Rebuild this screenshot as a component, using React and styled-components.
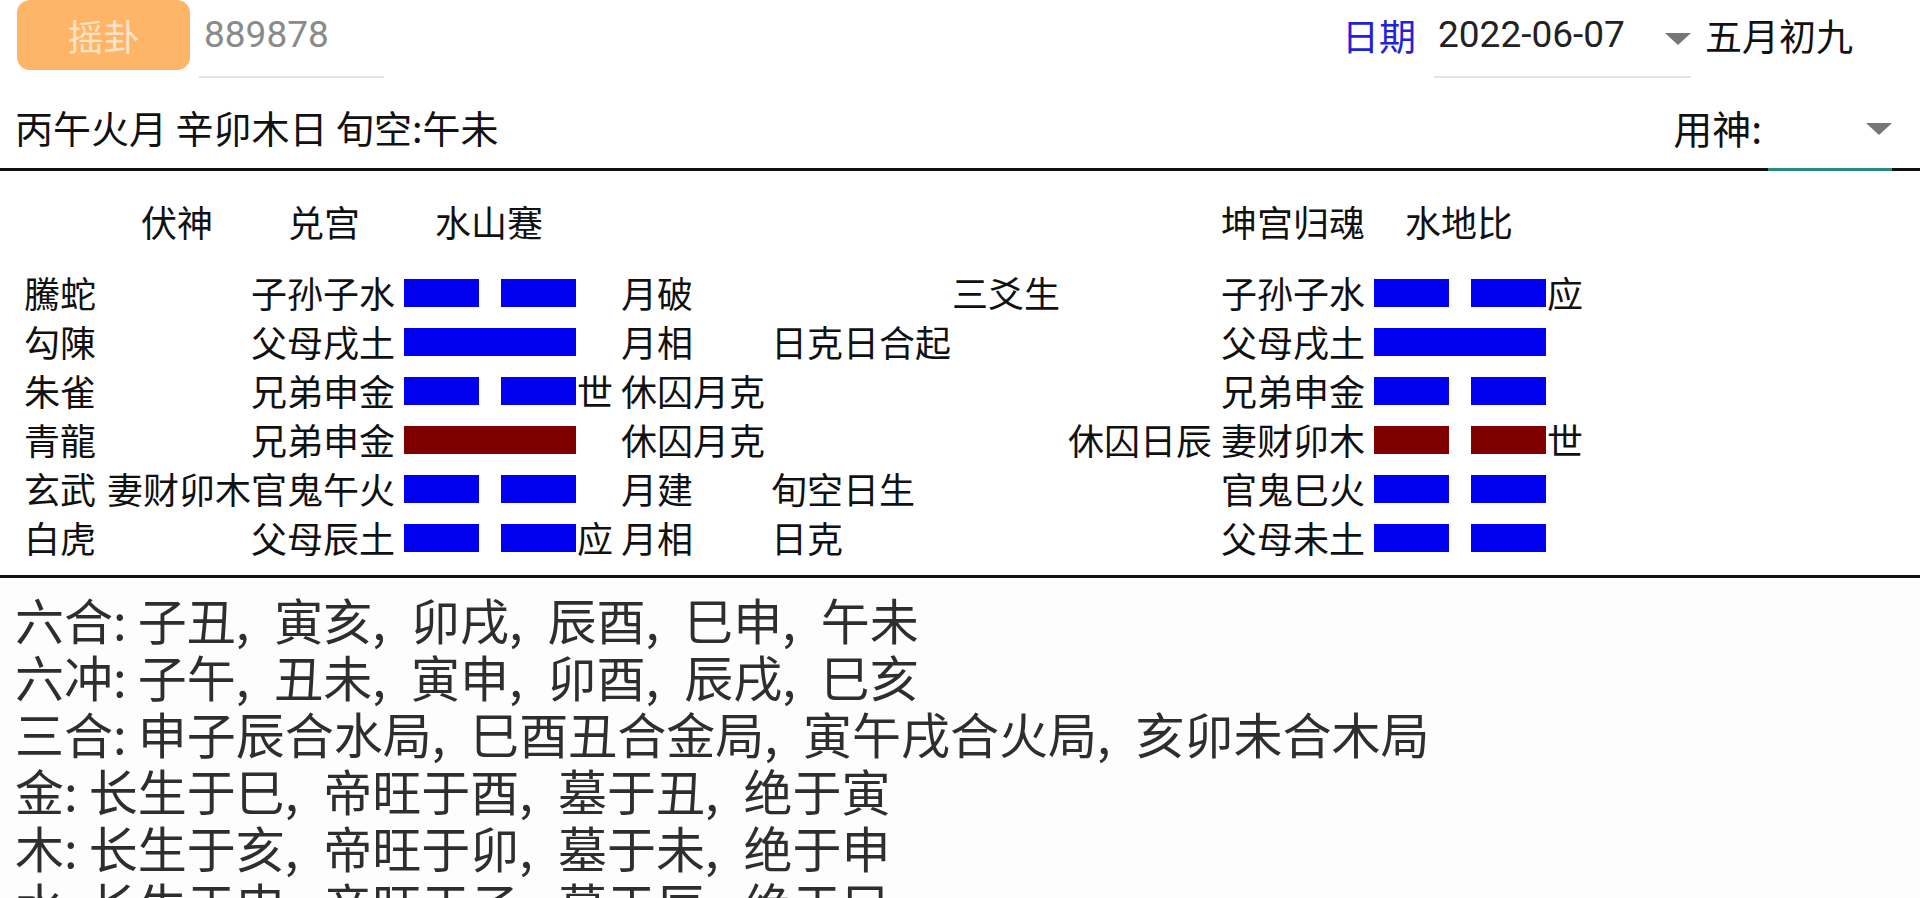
import React from "react";
import styled, { createGlobalStyle } from "styled-components";

const GlobalStyle = createGlobalStyle`
  html, body {
    margin: 0;
    padding: 0;
    background: #ffffff;
  }
  body {
    font-family: "Noto Sans CJK SC", "Noto Sans", sans-serif;
    color: #111;
  }
`;

const left = [
  { spirit: "騰蛇", fu: "", qin: "子孙子水", yao: "yin", mark: "", a: "月破", b: "", c: "三爻生", d: "" },
  { spirit: "勾陳", fu: "", qin: "父母戌土", yao: "yang", mark: "", a: "月相", b: "日克日合起", c: "", d: "" },
  { spirit: "朱雀", fu: "", qin: "兄弟申金", yao: "yin", mark: "世", a: "休囚月克", b: "", c: "", d: "" },
  { spirit: "青龍", fu: "", qin: "兄弟申金", yao: "yang", moving: true, mark: "", a: "休囚月克", b: "", c: "", d: "休囚日辰" },
  { spirit: "玄武", fu: "妻财卯木", qin: "官鬼午火", yao: "yin", mark: "", a: "月建", b: "旬空日生", c: "", d: "" },
  { spirit: "白虎", fu: "", qin: "父母辰土", yao: "yin", mark: "应", a: "月相", b: "日克", c: "", d: "" },
];

const right = [
  { qin: "子孙子水", yao: "yin", mark: "应" },
  { qin: "父母戌土", yao: "yang", mark: "" },
  { qin: "兄弟申金", yao: "yin", mark: "" },
  { qin: "妻财卯木", yao: "yin", moving: true, mark: "世" },
  { qin: "官鬼巳火", yao: "yin", mark: "" },
  { qin: "父母未土", yao: "yin", mark: "" },
];

const notes = [
  { label: "六合", items: ["子丑", "寅亥", "卯戌", "辰酉", "巳申", "午未"] },
  { label: "六冲", items: ["子午", "丑未", "寅申", "卯酉", "辰戌", "巳亥"] },
  { label: "三合", items: ["申子辰合水局", "巳酉丑合金局", "寅午戌合火局", "亥卯未合木局"] },
  { label: "金", items: ["长生于巳", "帝旺于酉", "墓于丑", "绝于寅"] },
  { label: "木", items: ["长生于亥", "帝旺于卯", "墓于未", "绝于申"] },
  { label: "水", items: ["长生于申", "帝旺于子", "墓于辰", "绝于巳"] },
];

function Caret() {
  return (
    <CaretSvg viewBox="0 0 26 12">
      <polygon points="0,0 26,0 13,12" fill="#767676" />
    </CaretSvg>
  );
}

function Yao({ type, moving }) {
  const color = moving ? "#800000" : "#0000ee";
  if (type === "yang") {
    return (
      <BarCell>
        <Bar color={color} full />
      </BarCell>
    );
  }
  return (
    <BarCell>
      <Bar color={color} />
      <Bar color={color} />
    </BarCell>
  );
}

export default function App() {
  return (
    <>
      <GlobalStyle />
      <Page>
        <TopBar>
          <ShakeButton>摇卦</ShakeButton>
          <NumberField>889878</NumberField>
          <Spacer />
          <DateLabel>日期</DateLabel>
          <DateField>
            <span>2022-06-07</span>
            <Caret />
          </DateField>
          <Lunar>五月初九</Lunar>
        </TopBar>

        <InfoBar>
          <InfoText>丙午火月 辛卯木日 旬空:午未</InfoText>
          <Spacer />
          <UseGod>用神:</UseGod>
          <UseGodCaret>
            <Caret />
          </UseGodCaret>
        </InfoBar>

        <Divider>
          <Line />
          <Line accent />
          <Line short />
        </Divider>

        <Board>
          <HeadRow>
            <Cell>伏神</Cell>
            <Cell>兑宫</Cell>
            <Cell>水山蹇</Cell>
            <Cell>坤宫归魂</Cell>
            <Cell>水地比</Cell>
          </HeadRow>
          {left.map((row, i) => (
            <YaoRow key={i}>
              <Cell>{row.spirit}</Cell>
              <Cell>{row.fu}</Cell>
              <Cell>{row.qin}</Cell>
              <Yao type={row.yao} moving={row.moving} />
              <Mark>{row.mark}</Mark>
              <Cell>{row.a}</Cell>
              <Cell>{row.b}</Cell>
              <Cell>{row.c}</Cell>
              <Cell>{row.d}</Cell>
              <Cell>{right[i].qin}</Cell>
              <Yao type={right[i].yao} moving={right[i].moving} />
              <Mark>{right[i].mark}</Mark>
            </YaoRow>
          ))}
        </Board>

        <Divider>
          <Line />
        </Divider>

        <Notes>
          {notes.map((n) => (
            <NoteLine key={n.label}>
              {n.label}: {n.items.map((it, j) => (
                <React.Fragment key={j}>
                  {it}
                  {j < n.items.length - 1 && <Comma>,</Comma>}
                </React.Fragment>
              ))}
            </NoteLine>
          ))}
        </Notes>
      </Page>
    </>
  );
}

const Page = styled.div`
  width: 1920px;
  min-height: 898px;
  background: #ffffff;
`;

const TopBar = styled.div`
  display: flex;
  align-items: flex-start;
  height: 78px;
`;

const ShakeButton = styled.button`
  margin-left: 17px;
  width: 173px;
  height: 70px;
  border: none;
  border-radius: 13px;
  background: #ffb567;
  color: #fde4c9;
  font-family: "Noto Sans CJK SC", sans-serif;
  font-size: 36px;
  padding: 0;
  line-height: 70px;
`;

const NumberField = styled.div`
  margin-left: 9px;
  width: 180px;
  height: 76px;
  padding-left: 5px;
  border-bottom: 2px solid #e4e4e4;
  font-family: Roboto, "Noto Sans", sans-serif;
  font-size: 37px;
  line-height: 70px;
  color: #8a8a8a;
`;

const Spacer = styled.div`
  flex: 1;
`;

const DateLabel = styled.div`
  font-size: 37px;
  line-height: 70px;
  color: #2222d6;
  margin-right: 18px;
`;

const DateField = styled.div`
  display: flex;
  align-items: flex-start;
  justify-content: space-between;
  width: 253px;
  height: 76px;
  padding-left: 4px;
  border-bottom: 2px solid #e4e4e4;
  font-family: Roboto, "Noto Sans", sans-serif;
  font-size: 37px;
  color: #222;

  span {
    line-height: 70px;
  }
  svg {
    margin-top: 33px;
  }
`;

const CaretSvg = styled.svg`
  width: 26px;
  height: 12px;
  display: block;
`;

const Lunar = styled.div`
  margin-left: 14px;
  margin-right: 67px;
  font-size: 37px;
  line-height: 70px;
  color: #111;
`;

const InfoBar = styled.div`
  display: flex;
  align-items: center;
  height: 82px;
  padding-top: 8px;
`;

const InfoText = styled.div`
  margin-left: 15px;
  font-size: 38px;
  line-height: 44px;
  color: #111;
  white-space: pre;
`;

const UseGod = styled.div`
  font-size: 39px;
  line-height: 44px;
  color: #111;
`;

const UseGodCaret = styled.div`
  margin-left: 104px;
  margin-right: 28px;
  padding-top: 4px;
`;

const Divider = styled.div`
  display: flex;
  height: 3px;
`;

const Line = styled.div`
  height: 3px;
  background: ${(p) => (p.accent ? "#2b8a7e" : "#111")};
  flex: ${(p) => (p.accent ? "0 0 124px" : p.short ? "0 0 28px" : "1")};
`;

const Board = styled.div`
  padding: 26px 0 13px;
`;

const HeadRow = styled.div`
  display: grid;
  grid-template-columns: 147px 147px 786px 184px auto;
  padding-left: 141px;
  height: 49px;
  margin-bottom: 22px;
  font-size: 36px;
  line-height: 49px;
`;

const YaoRow = styled.div`
  display: grid;
  grid-template-columns: 83px 144px 153px 172px 45px 150px 181px 116px 153px 153px 172px auto;
  padding-left: 24px;
  height: 49px;
  font-size: 36px;
  line-height: 49px;
  align-items: center;
`;

const Cell = styled.div`
  white-space: nowrap;
  color: #111;
`;

const Mark = styled.div`
  white-space: nowrap;
  padding-left: 1px;
  color: #111;
`;

const BarCell = styled.div`
  display: flex;
  justify-content: space-between;
  height: 28px;
`;

const Bar = styled.div`
  width: ${(p) => (p.full ? "172px" : "75px")};
  height: 28px;
  background: ${(p) => p.color};
`;

const Notes = styled.div`
  padding: 12px 15px 0;
  background: #fdfdfd;
`;

const NoteLine = styled.div`
  font-size: 49px;
  line-height: 57px;
  color: #2e2e2e;
  white-space: nowrap;
`;

const Comma = styled.span`
  margin-right: 25px;
`;
